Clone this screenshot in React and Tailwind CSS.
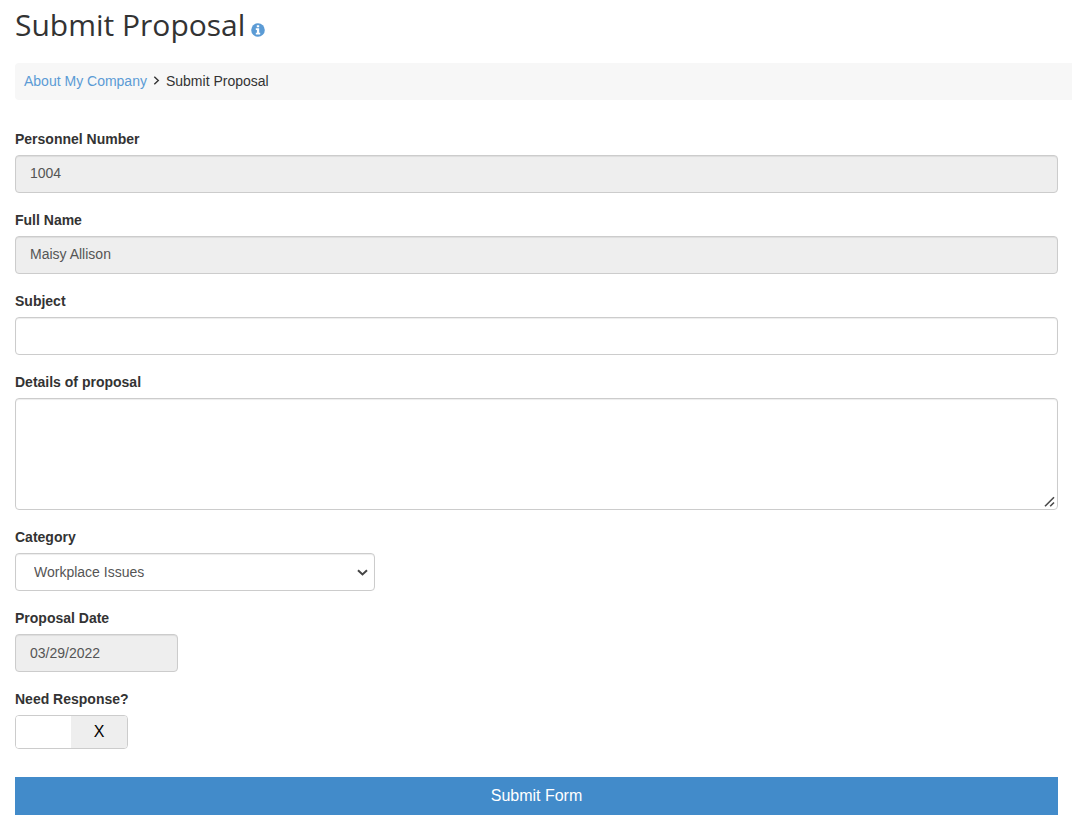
import { useState } from "react";

const fieldBase =
  "block rounded-sm border border-[#ccc] text-sm text-[#555] shadow-[inset_0_1px_1px_rgba(0,0,0,0.075)] outline-none focus:border-[#66afe9]";

function InfoIcon() {
  return (
    <svg className="h-[14px] w-[14px]" viewBox="0 0 14 14" aria-hidden="true">
      <circle cx="7" cy="7" r="6.8" fill="currentColor" />
      <path d="M5.8 2.3h2.4v2H5.8zM4.8 5.3h3.4v4.5h1v1.6H4.8V9.8h1.1V6.9H4.8z" fill="#fff" />
    </svg>
  );
}

function Field({ id, label, children }) {
  return (
    <div className="mb-[17px] flex flex-col items-start gap-1.5">
      <label htmlFor={id} className="text-sm font-bold">
        {label}
      </label>
      {children}
    </div>
  );
}

function Toggle({ id }) {
  const [on, setOn] = useState(false);
  return (
    <label
      htmlFor={id}
      className="relative flex h-[34px] w-[113px] cursor-pointer overflow-hidden rounded-sm border border-[#ccc] text-base text-black"
    >
      <input
        id={id}
        type="checkbox"
        checked={on}
        onChange={(e) => setOn(e.target.checked)}
        className="absolute inset-0 m-0 h-full w-full cursor-pointer opacity-0"
      />
      <span className={on ? "flex w-[55px] items-center justify-center bg-[#428bca] text-white" : "w-[55px] bg-white"}>
        {on ? "✓" : ""}
      </span>
      <span className={on ? "flex-1 bg-white" : "flex flex-1 items-center justify-center bg-[#eee]"}>
        {on ? "" : "X"}
      </span>
    </label>
  );
}

export default function App() {
  return (
    <main className="bg-white pb-2 pl-[15px] font-['Liberation_Sans',Arial,sans-serif] text-sm text-[#333]">
      <header className="flex h-[63px] items-start gap-1.5 pt-[5px]">
        <h1 className="font-['Open_Sans','Segoe_UI',sans-serif] text-[30px] leading-10 font-normal">
          Submit Proposal
        </h1>
        <button type="button" aria-label="About this form" className="mt-[18px] text-[#5b9bd5]">
          <InfoIcon />
        </button>
      </header>

      <nav aria-label="Breadcrumb" className="rounded-l-sm bg-[#f7f7f7] px-[9px] pt-[7px] pb-[9px]">
        <ol className="flex h-[21px] items-center">
          <li>
            <a href="#company" className="text-[#5b9bd5]">
              About My Company
            </a>
          </li>
          <li className="flex items-center">
            <svg className="mx-[6px] h-[9px] w-[7px]" viewBox="0 0 7 9" fill="none" stroke="#333" strokeWidth="1.4" aria-hidden="true">
              <path d="M1.3 0.7 5.3 4.5 1.3 8.3" />
            </svg>
            <span aria-current="page">Submit Proposal</span>
          </li>
        </ol>
      </nav>

      <form className="pt-[29px] pr-[14px]" onSubmit={(e) => e.preventDefault()}>
        <Field id="personnel" label="Personnel Number">
          <input id="personnel" readOnly defaultValue="1004" className={`${fieldBase} h-[38px] w-full bg-[#eee] px-[14px] pb-0.5`} />
        </Field>
        <Field id="name" label="Full Name">
          <input id="name" readOnly defaultValue="Maisy Allison" className={`${fieldBase} h-[38px] w-full bg-[#eee] px-[14px] pb-0.5`} />
        </Field>
        <Field id="subject" label="Subject">
          <input id="subject" className={`${fieldBase} h-[38px] w-full bg-white px-[14px] pb-0.5`} />
        </Field>
        <Field id="details" label="Details of proposal">
          <div className="relative w-full">
            <textarea
              id="details"
              className={`${fieldBase} h-28 w-full resize-y bg-white px-[14px] py-2 [&::-webkit-resizer]:hidden`}
            />
            <svg
              className="pointer-events-none absolute right-[3px] bottom-[3px] h-[11px] w-[11px]"
              viewBox="0 0 11 11"
              fill="none"
              stroke="#4a4a4a"
              strokeWidth="1.6"
              aria-hidden="true"
            >
              <path d="M1 10.3 10 1.3M6.2 10.3 10 6.5" />
            </svg>
          </div>
        </Field>
        <Field id="category" label="Category">
          <div className="relative w-[360px] max-w-full">
            <select id="category" className={`${fieldBase} h-[38px] w-full appearance-none bg-white pr-8 pl-[18px]`}>
              <option>Workplace Issues</option>
            </select>
            <svg
              className="pointer-events-none absolute top-4 right-[7px] h-[7px] w-[11px]"
              viewBox="0 0 11 7"
              fill="none"
              stroke="#444"
              strokeWidth="2"
              aria-hidden="true"
            >
              <path d="M1 1.2 5.5 5.4 10 1.2" />
            </svg>
          </div>
        </Field>
        <Field id="date" label="Proposal Date">
          <input id="date" readOnly defaultValue="03/29/2022" className={`${fieldBase} h-[38px] w-[163px] bg-[#eee] px-[14px]`} />
        </Field>
        <Field id="response" label="Need Response?">
          <Toggle id="response" />
        </Field>
        <button type="submit" className="mt-[11px] h-[38px] w-full bg-[#428bca] text-base text-white">
          Submit Form
        </button>
      </form>
    </main>
  );
}
